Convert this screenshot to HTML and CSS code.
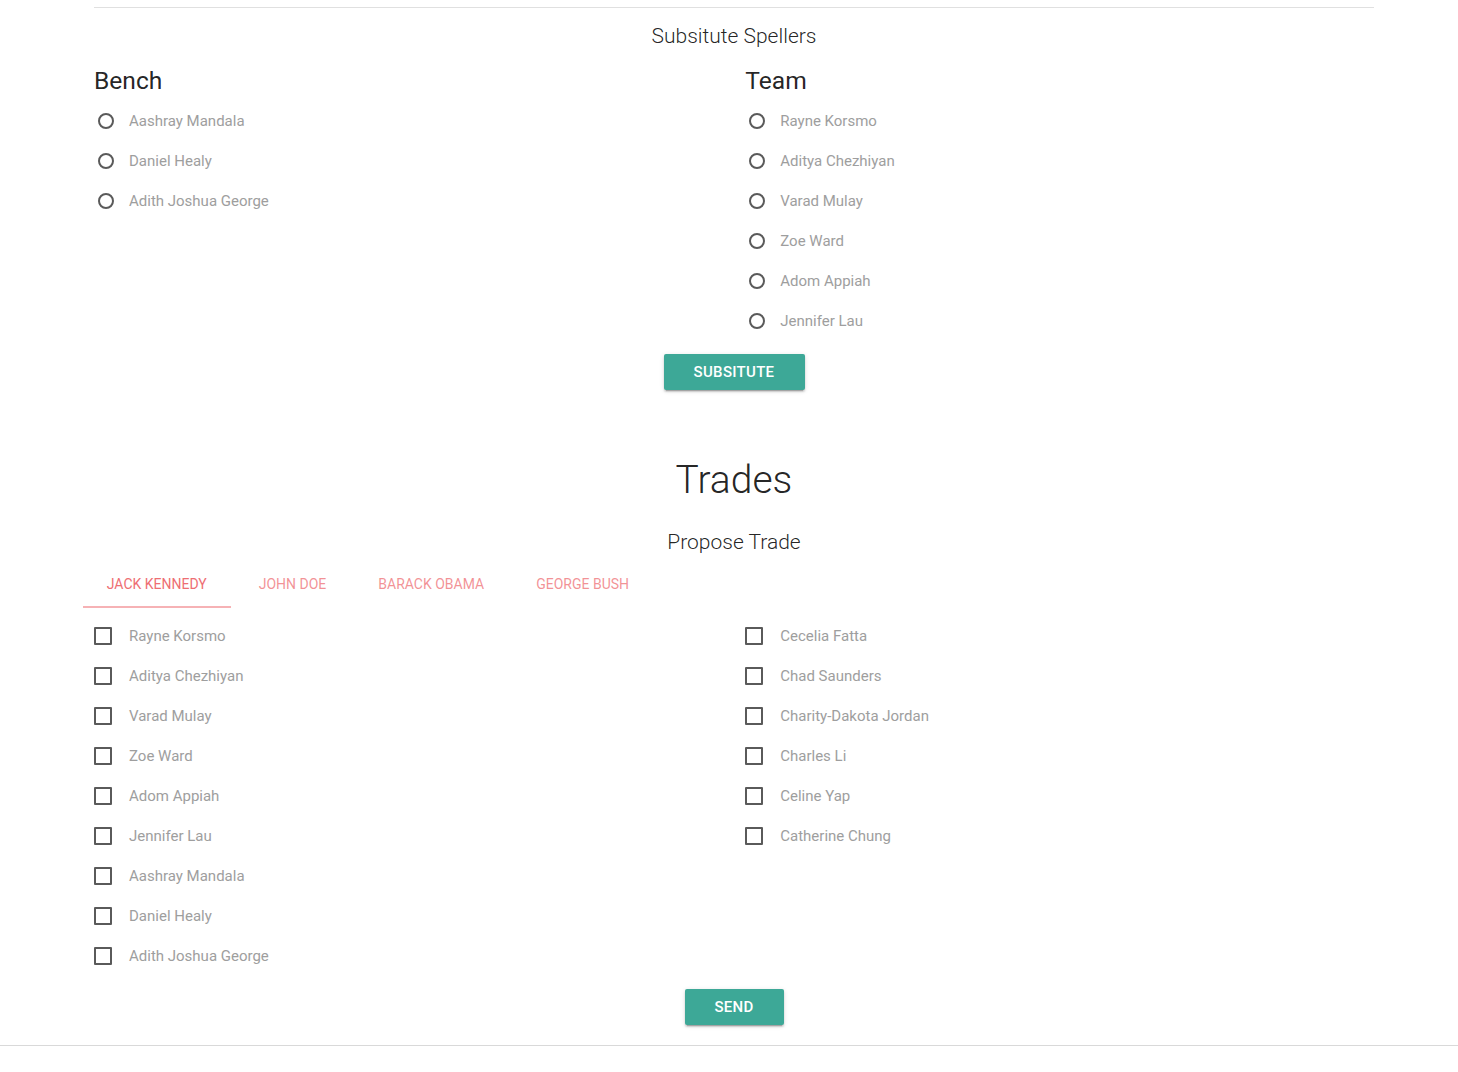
FILE: index.html
```html
<!DOCTYPE html>
<html lang="en">
<head>
<meta charset="utf-8">
<title>Spellers</title>
<link rel="stylesheet" href="styles.css">
</head>
<body>
<div class="container">
  <hr class="top-rule">
  <h6 class="sub-title">Subsitute Spellers</h6>
  <div class="row">
    <div class="col">
      <h5 class="col-title">Bench</h5>
      <label class="opt"><span class="radio"></span>Aashray Mandala</label>
      <label class="opt"><span class="radio"></span>Daniel Healy</label>
      <label class="opt"><span class="radio"></span>Adith Joshua George</label>
    </div>
    <div class="col">
      <h5 class="col-title">Team</h5>
      <label class="opt"><span class="radio"></span>Rayne Korsmo</label>
      <label class="opt"><span class="radio"></span>Aditya Chezhiyan</label>
      <label class="opt"><span class="radio"></span>Varad Mulay</label>
      <label class="opt"><span class="radio"></span>Zoe Ward</label>
      <label class="opt"><span class="radio"></span>Adom Appiah</label>
      <label class="opt"><span class="radio"></span>Jennifer Lau</label>
    </div>
  </div>
  <div class="btn-wrap btn-wrap-sub"><button class="btn btn-sub">Subsitute</button></div>

  <h3 class="big-title">Trades</h3>
  <h6 class="sub-title propose">Propose Trade</h6>

  <ul class="tabs">
    <li class="tab active">Jack Kennedy</li>
    <li class="tab">John Doe</li>
    <li class="tab">Barack Obama</li>
    <li class="tab">George Bush</li>
  </ul>

  <div class="row trade-row">
    <div class="col">
      <label class="opt"><span class="check"></span>Rayne Korsmo</label>
      <label class="opt"><span class="check"></span>Aditya Chezhiyan</label>
      <label class="opt"><span class="check"></span>Varad Mulay</label>
      <label class="opt"><span class="check"></span>Zoe Ward</label>
      <label class="opt"><span class="check"></span>Adom Appiah</label>
      <label class="opt"><span class="check"></span>Jennifer Lau</label>
      <label class="opt"><span class="check"></span>Aashray Mandala</label>
      <label class="opt"><span class="check"></span>Daniel Healy</label>
      <label class="opt"><span class="check"></span>Adith Joshua George</label>
    </div>
    <div class="col">
      <label class="opt"><span class="check"></span>Cecelia Fatta</label>
      <label class="opt"><span class="check"></span>Chad Saunders</label>
      <label class="opt"><span class="check"></span>Charity-Dakota Jordan</label>
      <label class="opt"><span class="check"></span>Charles Li</label>
      <label class="opt"><span class="check"></span>Celine Yap</label>
      <label class="opt"><span class="check"></span>Catherine Chung</label>
    </div>
  </div>
  <div class="btn-wrap btn-wrap-send"><button class="btn btn-send">Send</button></div>
</div>
<hr class="bottom-rule">
</body>
</html>
```
FILE: styles.css
```css
html, body {
  margin: 0;
  padding: 0;
  background: #fff;
}
body {
  font-family: Roboto, "Noto Sans", "Liberation Sans", sans-serif;
  font-size: 15px;
  color: rgba(0, 0, 0, 0.87);
}
.container {
  width: 1280px;
  margin-left: 94px;
}
.top-rule {
  margin: 7px 0 0;
  border: 0;
  border-top: 1px solid #e0e0e0;
  height: 0;
}
.sub-title {
  margin: 13px 0 0;
  font-size: 21px;
  font-weight: 300;
  line-height: 30px;
  text-align: center;
}
.row {
  display: flex;
  margin: 0 -11.25px;
}
.col {
  width: 651.25px;
  padding: 0 11.25px;
  box-sizing: border-box;
  display: flex;
  flex-direction: column;
  align-items: flex-start;
  gap: 15px;
}
.col-title {
  margin: 16px 0 0;
  font-size: 24.6px;
  font-weight: 400;
  line-height: 27px;
}
.opt {
  position: relative;
  display: block;
  height: 25px;
  line-height: 25px;
  padding-left: 35px;
  font-size: 15px;
  color: #9e9e9e;
  cursor: pointer;
}
.radio {
  position: absolute;
  left: 4px;
  top: 4px;
  width: 16px;
  height: 16px;
  box-sizing: border-box;
  border: 2px solid #5a5a5a;
  border-radius: 50%;
}
.check {
  position: absolute;
  left: 0;
  top: 3px;
  width: 18px;
  height: 18px;
  box-sizing: border-box;
  border: 2px solid #5a5a5a;
  border-radius: 1px;
}
.btn-wrap {
  display: flex;
  justify-content: center;
}
.btn-wrap-sub {
  margin-top: 20px;
}
.btn-wrap-send {
  margin-top: 20px;
}
.btn {
  height: 36px;
  line-height: 36px;
  padding: 0;
  border: 0;
  border-radius: 2px;
  background: #3da897;
  color: #fff;
  font-family: Roboto, "Noto Sans", "Liberation Sans", sans-serif;
  font-size: 15px;
  font-weight: 500;
  letter-spacing: 0.3px;
  text-transform: uppercase;
  box-shadow: 0 2px 2px 0 rgba(0,0,0,0.14), 0 1px 5px 0 rgba(0,0,0,0.12), 0 3px 1px -2px rgba(0,0,0,0.2);
  cursor: pointer;
}
.btn-sub { width: 141px; }
.btn-send { width: 99px; }
.big-title {
  margin: 66px 0 0;
  font-size: 39px;
  font-weight: 300;
  line-height: 48px;
  text-align: center;
}
.propose {
  margin-top: 23px;
}
.tabs {
  list-style: none;
  margin: 3px 0 0 -11.25px;
  padding: 0;
  display: flex;
  gap: 4px;
  height: 48px;
}
.tab {
  position: relative;
  padding: 0 24px;
  line-height: 48px;
  height: 48px;
  font-size: 14px;
  text-transform: uppercase;
  color: rgba(238, 110, 115, 0.75);
  text-align: center;
  min-width: 80px;
  box-sizing: border-box;
}
.tab.active {
  color: #ee6e73;
}
.tab.active::after {
  content: "";
  position: absolute;
  left: 0;
  right: 0;
  bottom: 0;
  height: 2px;
  background: #f6b2b5;
}
.trade-row {
  margin-top: 16px;
}
.bottom-rule {
  margin: 20px 0 0;
  border: 0;
  border-top: 1px solid #d9d9d9;
  height: 0;
}
```
